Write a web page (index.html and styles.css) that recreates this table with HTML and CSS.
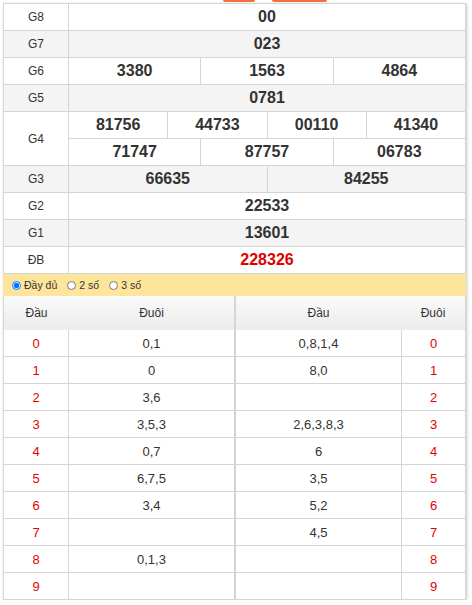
FILE: index.html
```
<!DOCTYPE html>
<html lang="vi">
<head>
<meta charset="utf-8">
<title>Kết quả xổ số</title>
<link rel="stylesheet" href="styles.css">
</head>
<body>
<div class="tabs"><span class="tab tab-a"></span><span class="tab tab-b"></span></div>
<div class="box">
  <div class="results">
    <div class="row"><div class="label">G8</div><div class="cells"><div class="cell">00</div></div></div>
    <div class="row alt"><div class="label">G7</div><div class="cells"><div class="cell">023</div></div></div>
    <div class="row"><div class="label">G6</div><div class="cells"><div class="cell">3380</div><div class="cell">1563</div><div class="cell">4864</div></div></div>
    <div class="row alt"><div class="label">G5</div><div class="cells"><div class="cell">0781</div></div></div>
    <div class="row double"><div class="label">G4</div>
      <div class="stack">
        <div class="cells sub"><div class="cell">81756</div><div class="cell">44733</div><div class="cell">00110</div><div class="cell">41340</div></div>
        <div class="cells"><div class="cell">71747</div><div class="cell">87757</div><div class="cell">06783</div></div>
      </div>
    </div>
    <div class="row alt"><div class="label">G3</div><div class="cells"><div class="cell">66635</div><div class="cell">84255</div></div></div>
    <div class="row"><div class="label">G2</div><div class="cells"><div class="cell">22533</div></div></div>
    <div class="row alt"><div class="label">G1</div><div class="cells"><div class="cell">13601</div></div></div>
    <div class="row"><div class="label">ĐB</div><div class="cells"><div class="cell special">228326</div></div></div>
  </div>
  <div class="options">
    <label class="opt"><input type="radio" name="mode" checked>Đầy đủ</label>
    <label class="opt"><input type="radio" name="mode">2 số</label>
    <label class="opt"><input type="radio" name="mode">3 số</label>
  </div>
  <div class="loto">
    <div class="half left">
      <div class="lrow head"><div class="hkey">Đầu</div><div class="hval">Đuôi</div></div>
      <div class="lrow"><div class="key">0</div><div class="val">0,1</div></div>
      <div class="lrow"><div class="key">1</div><div class="val">0</div></div>
      <div class="lrow"><div class="key">2</div><div class="val">3,6</div></div>
      <div class="lrow"><div class="key">3</div><div class="val">3,5,3</div></div>
      <div class="lrow"><div class="key">4</div><div class="val">0,7</div></div>
      <div class="lrow"><div class="key">5</div><div class="val">6,7,5</div></div>
      <div class="lrow"><div class="key">6</div><div class="val">3,4</div></div>
      <div class="lrow"><div class="key">7</div><div class="val"></div></div>
      <div class="lrow"><div class="key">8</div><div class="val">0,1,3</div></div>
      <div class="lrow"><div class="key">9</div><div class="val"></div></div>
    </div>
    <div class="half right">
      <div class="lrow head"><div class="hval">Đầu</div><div class="hkey">Đuôi</div></div>
      <div class="lrow"><div class="val">0,8,1,4</div><div class="key">0</div></div>
      <div class="lrow"><div class="val">8,0</div><div class="key">1</div></div>
      <div class="lrow"><div class="val"></div><div class="key">2</div></div>
      <div class="lrow"><div class="val">2,6,3,8,3</div><div class="key">3</div></div>
      <div class="lrow"><div class="val">6</div><div class="key">4</div></div>
      <div class="lrow"><div class="val">3,5</div><div class="key">5</div></div>
      <div class="lrow"><div class="val">5,2</div><div class="key">6</div></div>
      <div class="lrow"><div class="val">4,5</div><div class="key">7</div></div>
      <div class="lrow"><div class="val"></div><div class="key">8</div></div>
      <div class="lrow"><div class="val"></div><div class="key">9</div></div>
    </div>
  </div>
</div>
</body>
</html>
```
FILE: styles.css
```
* { box-sizing: border-box; }
body {
  margin: 0;
  background: #fff;
  font-family: "Liberation Sans", Arial, sans-serif;
  color: #333;
}
.tabs {
  height: 3px;
  display: flex;
  padding-left: 223px;
  gap: 17px;
}
.tab {
  display: block;
  height: 2px;
  background: #f4703e;
  border-radius: 0 0 3px 3px;
}
.tab-a { width: 32px; }
.tab-b { width: 55px; }
.box {
  margin-left: 3px;
  width: 463px;
  box-shadow: 1px 1px 3px rgba(0, 0, 0, 0.22);
}
.results {
  border: 1px solid #d5d5d5;
  border-bottom: none;
}
.row {
  display: flex;
  height: 27px;
  border-bottom: 1px solid #d5d5d5;
  background: #fff;
}
.row.alt { background: #f4f4f4; }
.row.double { height: 54px; }
.label {
  width: 65px;
  flex: none;
  border-right: 1px solid #d5d5d5;
  display: flex;
  align-items: center;
  justify-content: center;
  font-size: 12px;
  color: #333;
}
.stack {
  flex: 1;
  display: flex;
  flex-direction: column;
}
.cells {
  flex: 1;
  display: flex;
}
.cells.sub { border-bottom: 1px solid #d5d5d5; }
.cell {
  flex: 1 1 0;
  display: flex;
  align-items: center;
  justify-content: center;
  font-size: 16px;
  font-weight: bold;
  color: #333;
}
.cell + .cell { border-left: 1px solid #d5d5d5; }
.cell.special { color: #e00000; }
.options {
  height: 22px;
  background: #fde59b;
  display: flex;
  align-items: center;
  padding-left: 9px;
  gap: 10px;
  font-size: 10.5px;
  color: #333;
}
.opt {
  display: flex;
  align-items: center;
}
.opt input {
  width: 9px;
  height: 9px;
  margin: 0 3px 0 0;
}
.loto { display: flex; }
.half {
  border: 1px solid #d5d5d5;
  border-top: none;
}
.half.left { width: 232px; }
.half.right { width: 231px; }
.lrow {
  display: flex;
  height: 27px;
  border-bottom: 1px solid #d5d5d5;
}
.lrow:last-child { border-bottom: none; height: 26px; }
.lrow.head {
  height: 34px;
  border-bottom: none;
  background: linear-gradient(#fafafa, #ececec);
}
.lrow > div {
  display: flex;
  align-items: center;
  justify-content: center;
  font-size: 13px;
}
.key, .hkey {
  width: 65px;
  flex: none;
}
.key { color: #e60000; }
.val, .hval {
  flex: 1;
  color: #333;
}
.left .key { border-right: 1px solid #d5d5d5; }
.right .key { width: 64px; border-left: 1px solid #d5d5d5; }
.right .hkey { width: 64px; }
.lrow > .hkey, .lrow > .hval {
  color: #333;
  font-size: 12px;
}
```
